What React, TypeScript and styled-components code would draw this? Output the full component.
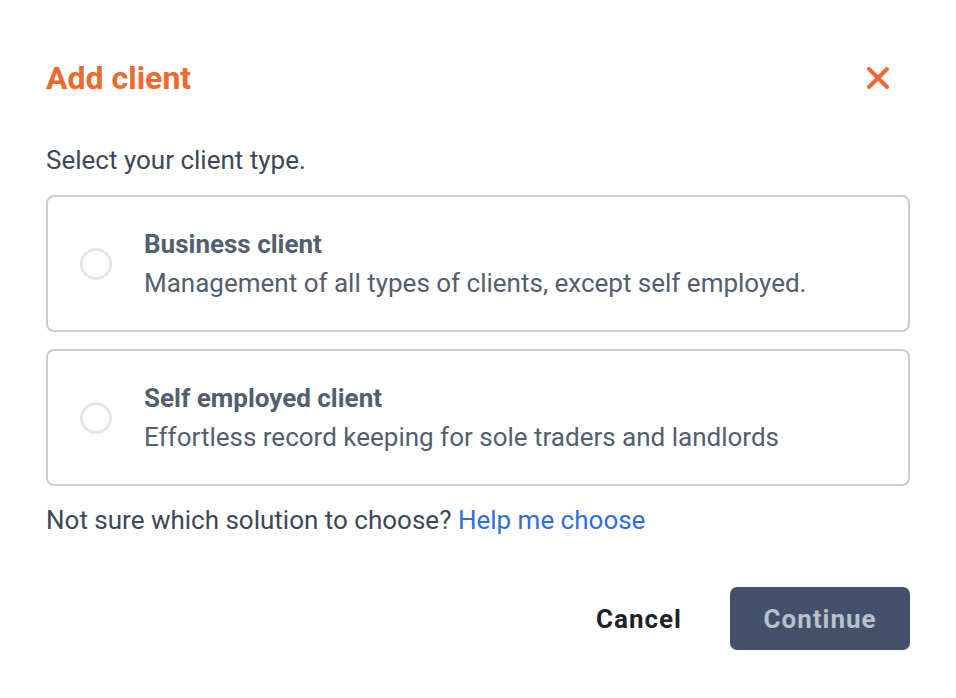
import React, { useState } from "react";
import styled, { createGlobalStyle } from "styled-components";

const GlobalStyle = createGlobalStyle`
  html, body {
    margin: 0;
    padding: 0;
    background: #ffffff;
  }
  body {
    font-family: Roboto, "Liberation Sans", Arial, sans-serif;
  }
`;

const Dialog = styled.div`
  box-sizing: border-box;
  width: 956px;
  height: 698px;
  padding: 58px 46px 0 46px;
  display: flex;
  flex-direction: column;
  background: #fff;
`;

const Header = styled.div`
  display: flex;
  align-items: center;
  justify-content: space-between;
  height: 40px;
`;

const Title = styled.h1`
  margin: 0;
  font-size: 32px;
  font-weight: 700;
  color: #ee692c;
`;

const CloseButton = styled.button`
  border: none;
  background: none;
  padding: 0;
  margin-right: 18px;
  width: 28px;
  height: 28px;
  display: flex;
  align-items: center;
  justify-content: center;
  cursor: pointer;
`;

const Lead = styled.p`
  margin: 47px 0 0 0;
  font-size: 26px;
  line-height: 30px;
  color: #3d4858;
`;

const Options = styled.div`
  display: flex;
  flex-direction: column;
  gap: 17px;
  margin-top: 20px;
`;

const OptionCard = styled.label<{ $selected: boolean }>`
  box-sizing: border-box;
  width: 864px;
  height: 137px;
  display: flex;
  align-items: center;
  gap: 32px;
  padding: 0 32px;
  border: 2px solid ${(p) => (p.$selected ? "#425169" : "#c9cdd6")};
  border-radius: 8px;
  cursor: pointer;
`;

const Radio = styled.span<{ $selected: boolean }>`
  box-sizing: border-box;
  flex: none;
  width: 32px;
  height: 32px;
  border-radius: 50%;
  border: 3px solid #e3e6eb;
  background: ${(p) => (p.$selected ? "#425169" : "#fff")};
`;

const OptionText = styled.div`
  display: flex;
  flex-direction: column;
  gap: 9px;
`;

const OptionTitle = styled.div`
  font-size: 26px;
  font-weight: 700;
  color: #535e6e;
  line-height: 30px;
`;

const OptionDesc = styled.div`
  font-size: 26px;
  color: #535e6e;
  line-height: 30px;
`;

const Help = styled.p`
  margin: 19px 0 0 0;
  font-size: 26px;
  line-height: 30px;
  color: #3d4858;
`;

const HelpLink = styled.a`
  color: #2f70d8;
  text-decoration: none;
`;

const Footer = styled.div`
  display: flex;
  justify-content: flex-end;
  align-items: center;
  gap: 48px;
  margin-top: 52px;
`;

const TextButton = styled.button`
  border: none;
  background: none;
  font-family: inherit;
  font-size: 26px;
  font-weight: 700;
  letter-spacing: 1px;
  color: #1f2328;
  padding: 0;
  cursor: pointer;
`;

const PrimaryButton = styled.button`
  width: 180px;
  height: 63px;
  border: none;
  border-radius: 7px;
  background: #425169;
  color: #b9c0cc;
  font-family: inherit;
  font-size: 26px;
  font-weight: 700;
  letter-spacing: 1px;
`;

const options = [
  {
    id: "business",
    title: "Business client",
    desc: "Management of all types of clients, except self employed.",
  },
  {
    id: "self",
    title: "Self employed client",
    desc: "Effortless record keeping for sole traders and landlords",
  },
];

export default function App() {
  const [selected, setSelected] = useState<string | null>(null);

  return (
    <>
      <GlobalStyle />
      <Dialog>
        <Header>
          <Title>Add client</Title>
          <CloseButton aria-label="Close">
            <svg width="24" height="24" viewBox="0 0 24 24">
              <path
                d="M3 3 L21 21 M21 3 L3 21"
                stroke="#ee692c"
                strokeWidth="4"
                strokeLinecap="round"
              />
            </svg>
          </CloseButton>
        </Header>
        <Lead>Select your client type.</Lead>
        <Options>
          {options.map((o) => (
            <OptionCard
              key={o.id}
              $selected={selected === o.id}
              onClick={() => setSelected(o.id)}
            >
              <Radio $selected={selected === o.id} />
              <OptionText>
                <OptionTitle>{o.title}</OptionTitle>
                <OptionDesc>{o.desc}</OptionDesc>
              </OptionText>
            </OptionCard>
          ))}
        </Options>
        <Help>
          Not sure which solution to choose? <HelpLink href="#">Help me choose</HelpLink>
        </Help>
        <Footer>
          <TextButton>Cancel</TextButton>
          <PrimaryButton disabled={!selected}>Continue</PrimaryButton>
        </Footer>
      </Dialog>
    </>
  );
}
